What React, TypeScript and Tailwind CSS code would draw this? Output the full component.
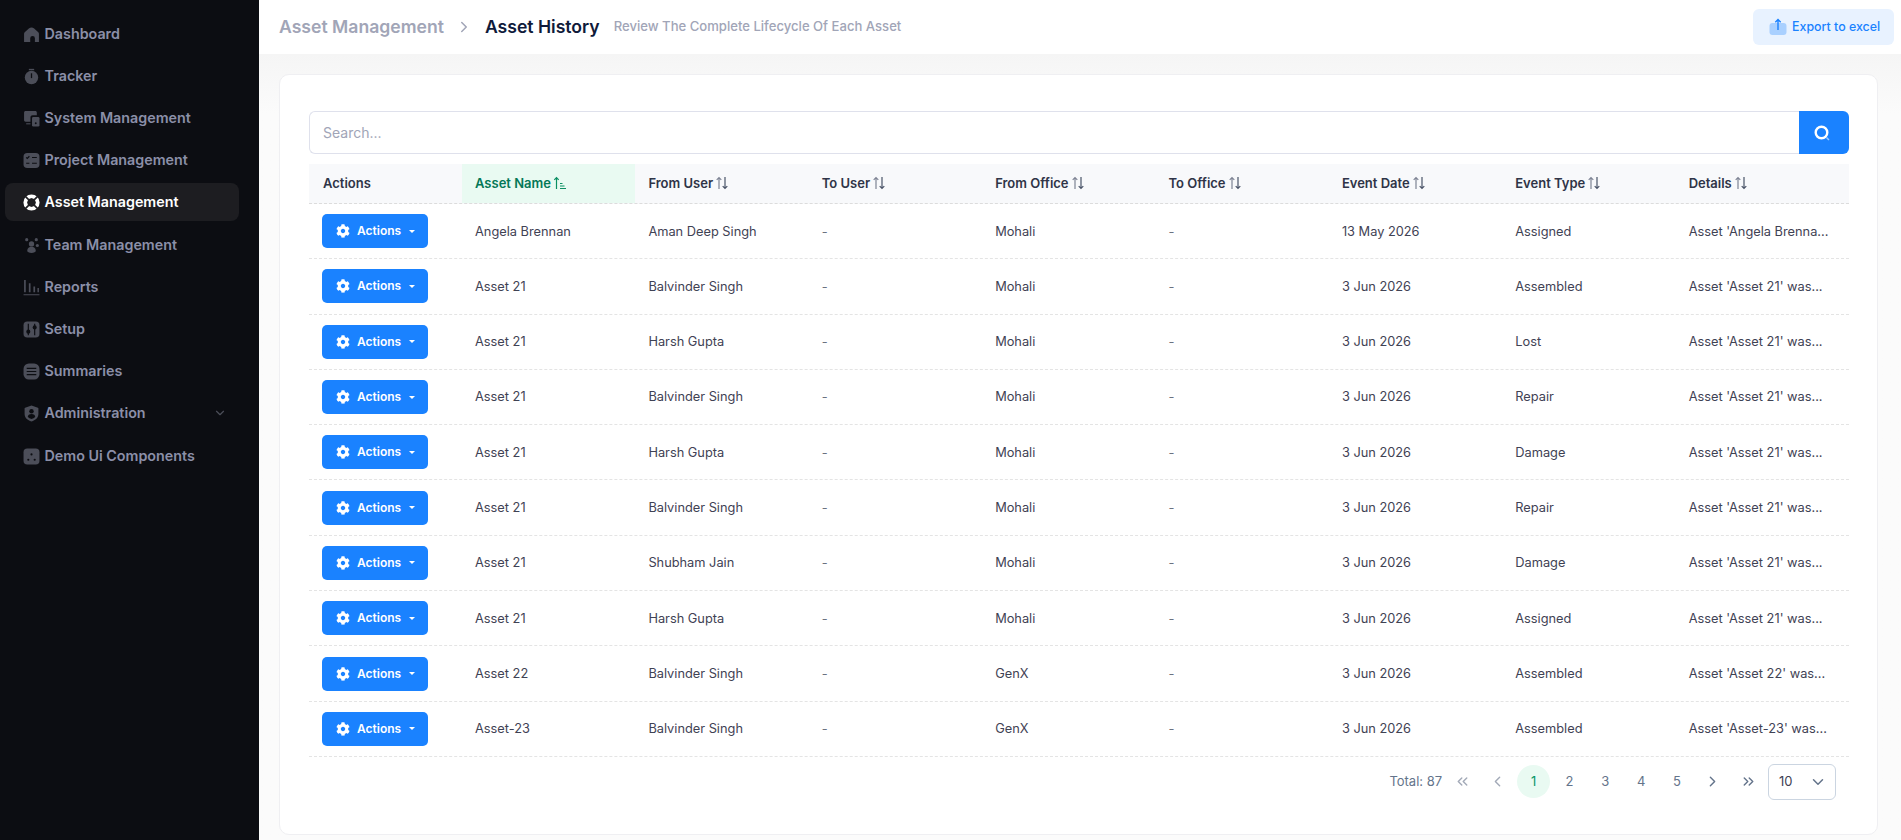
import React from 'react';
import { ChevronDown, ChevronLeft, ChevronRight, ChevronsLeft, ChevronsRight } from 'lucide-react';
import { FaCog } from 'react-icons/fa';

const muted = '#4c4e59';
const bgDark = '#0c0d12';

const IconHome = () => (
  <svg viewBox="0 0 16 16" className="w-[17px] h-[17px]">
    <path fill={muted} d="M1 15V7.2c0-.6.2-1 .6-1.400L5.500 2.300c1.500-1.300 3.500-1.300 5 0l3.900 3.500c.4.400.6.800.6 1.400V15h-3.800v-3.500a2.200 2.200 0 0 0-4.400 0V15z" />
  </svg>
);

const IconTimer = () => (
  <svg viewBox="0 0 16 16" className="w-[17px] h-[17px]">
    <rect x="5.500" y="0.800" width="5" height="1.300" fill={muted} />
    <circle cx="8" cy="9" r="6.300" fill={muted} />
    <rect x="7.400" y="5" width="1.200" height="4.500" fill={bgDark} />
  </svg>
);

const IconSystem = () => (
  <svg viewBox="0 0 16 16" className="w-[17px] h-[17px]">
    <path fill={muted} d="M1 2.500C1 1.600 1.600 1 2.500 1h9c.9 0 1.500.6 1.500 1.500V5H9c-1.100 0-2 .9-2 2v4H2.500C1.600 11 1 10.400 1 9.500z" />
    <rect x="8.500" y="6.500" width="7" height="9" rx="1.200" fill={muted} />
    <rect x="3" y="12.500" width="4" height="1" fill={muted} />
    <circle cx="12" cy="12.500" r="0.900" fill={bgDark} />
  </svg>
);

const IconProject = () => (
  <svg viewBox="0 0 16 16" className="w-[17px] h-[17px]">
    <rect x="0.500" y="1" width="15" height="14" rx="3.500" fill={muted} />
    <path stroke={bgDark} strokeWidth="1.100" fill="none" d="M3 5l1 1 2-2M8.500 5.200H13M3 10.600h3M8.500 10.600H13" />
  </svg>
);

const IconAsset = () => (
  <svg viewBox="0 0 16 16" className="w-[17px] h-[17px]">
    <circle cx="8" cy="8" r="5.800" fill="none" stroke="#fff" strokeWidth="3.600" />
    <path stroke="#1d1d21" strokeWidth="1.500" d="M1.500 1.500l4 4M14.500 1.500l-4 4M1.500 14.500l4-4M14.500 14.500l-4-4" />
    <rect x="5.200" y="5.200" width="5.600" height="5.600" fill="#1d1d21" transform="rotate(45 8 8)" />
  </svg>
);

const IconTeam = () => (
  <svg viewBox="0 0 16 16" className="w-[17px] h-[17px]">
    <circle cx="3.500" cy="2.500" r="1.500" fill={muted} />
    <circle cx="12.500" cy="2.500" r="1.500" fill={muted} />
    <circle cx="13.500" cy="8" r="1.500" fill={muted} />
    <circle cx="8" cy="6.500" r="2.500" fill={muted} />
    <path fill={muted} d="M4 13c0-2.500 1.800-3.800 4-3.800s4 1.300 4 3.800c0 1.300-1.800 2-4 2s-4-.7-4-2z" />
  </svg>
);

const IconReports = () => (
  <svg viewBox="0 0 16 16" className="w-[17px] h-[17px]">
    <path fill={muted} d="M1 1h1.600v11.500H1zM5.500 4h1.600v8.500H5.500zM9.800 7h1.600v5.500H9.800zM13.600 8.500H15v4h-1.400zM0.500 14.400h15v1h-15z" />
  </svg>
);

const IconSetup = () => (
  <svg viewBox="0 0 16 16" className="w-[17px] h-[17px]">
    <rect x="0.500" y="0.500" width="15" height="15" rx="3.500" fill={muted} />
    <path stroke={bgDark} strokeWidth="1.100" d="M5 2.500v11M11 2.500v11" />
    <circle cx="5" cy="10" r="1.900" fill={bgDark} />
    <circle cx="11" cy="6" r="1.900" fill={bgDark} />
  </svg>
);

const IconSummaries = () => (
  <svg viewBox="0 0 16 16" className="w-[17px] h-[17px]">
    <rect x="0.500" y="0.500" width="15" height="15" rx="5" fill={muted} />
    <path stroke={bgDark} strokeWidth="1.100" d="M3.500 5h9M3.500 8h9M3.500 11h9" />
  </svg>
);

const IconAdmin = () => (
  <svg viewBox="0 0 16 16" className="w-[17px] h-[17px]">
    <path fill={muted} d="M8 .5l6 2c.3.100.5.400.5.800v5.200c0 3.500-2.800 5.900-6.500 7-3.700-1.100-6.500-3.500-6.500-7V3.300c0-.4.200-.7.500-.8z" />
    <circle cx="8" cy="5.800" r="2.100" fill={bgDark} />
    <path fill={bgDark} d="M4.500 11.300c0-1.800 1.500-2.800 3.500-2.800s3.500 1 3.500 2.800c-1 .9-2.200 1.500-3.500 1.900-1.300-.4-2.500-1-3.500-1.900z" />
  </svg>
);

const IconDemo = () => (
  <svg viewBox="0 0 16 16" className="w-[17px] h-[17px]">
    <rect x="0.500" y="0.500" width="15" height="15" rx="3.500" fill={muted} />
    <circle cx="8" cy="6" r="1" fill={bgDark} />
    <circle cx="5" cy="11" r="1" fill={bgDark} />
    <circle cx="11" cy="11" r="1" fill={bgDark} />
  </svg>
);

const navItems = [
  { label: 'Dashboard', icon: IconHome },
  { label: 'Tracker', icon: IconTimer },
  { label: 'System Management', icon: IconSystem },
  { label: 'Project Management', icon: IconProject },
  { label: 'Asset Management', icon: IconAsset, active: true },
  { label: 'Team Management', icon: IconTeam, nudge: true },
  { label: 'Reports', icon: IconReports },
  { label: 'Setup', icon: IconSetup },
  { label: 'Summaries', icon: IconSummaries },
  { label: 'Administration', icon: IconAdmin, caret: true },
  { label: 'Demo Ui Components', icon: IconDemo, nudge: true },
];

const SortIcon = () => (
  <svg viewBox="0 0 14 14" className="w-[14px] h-[14px] ml-[2px] mb-[2px]">
    <path stroke="#7e8494" strokeWidth="1.200" fill="none" d="M4 13V1.500M1.700 3.800L4 1.500l2.300 2.300" />
    <path stroke="#4a5468" strokeWidth="1.200" fill="none" d="M10 1v11.500M7.700 10.200L10 12.500l2.300-2.300" />
  </svg>
);

const SortActiveIcon = () => (
  <svg viewBox="0 0 14 14" className="w-[14px] h-[14px] ml-[2px] mb-[2px]">
    <path stroke="#0b8f63" strokeWidth="1.200" fill="none" d="M3.500 13V1.500M1.300 3.800l2.200-2.300 2.200 2.300" />
    <path stroke="#0b8f63" strokeWidth="1" fill="none" d="M7 7.500h2.500M7 10h4.500M7 12.500h6" />
  </svg>
);

const columns = ['From User', 'To User', 'From Office', 'To Office', 'Event Date', 'Event Type', 'Details'];

const rows = [
  ['Angela Brennan', 'Aman Deep Singh', 'Mohali', '13 May 2026', 'Assigned', "Asset 'Angela Brenna..."],
  ['Asset 21', 'Balvinder Singh', 'Mohali', '3 Jun 2026', 'Assembled', "Asset 'Asset 21' was..."],
  ['Asset 21', 'Harsh Gupta', 'Mohali', '3 Jun 2026', 'Lost', "Asset 'Asset 21' was..."],
  ['Asset 21', 'Balvinder Singh', 'Mohali', '3 Jun 2026', 'Repair', "Asset 'Asset 21' was..."],
  ['Asset 21', 'Harsh Gupta', 'Mohali', '3 Jun 2026', 'Damage', "Asset 'Asset 21' was..."],
  ['Asset 21', 'Balvinder Singh', 'Mohali', '3 Jun 2026', 'Repair', "Asset 'Asset 21' was..."],
  ['Asset 21', 'Shubham Jain', 'Mohali', '3 Jun 2026', 'Damage', "Asset 'Asset 21' was..."],
  ['Asset 21', 'Harsh Gupta', 'Mohali', '3 Jun 2026', 'Assigned', "Asset 'Asset 21' was..."],
  ['Asset 22', 'Balvinder Singh', 'GenX', '3 Jun 2026', 'Assembled', "Asset 'Asset 22' was..."],
  ['Asset-23', 'Balvinder Singh', 'GenX', '3 Jun 2026', 'Assembled', "Asset 'Asset-23' was..."],
];

const gridCols = 'grid grid-cols-[153px_repeat(8,1fr)]';

const App: React.FC = () => {
  return (
    <div className="flex h-[840px] w-full overflow-hidden font-['Inter',sans-serif] bg-[#f9f9f9]">
      <aside className="w-[259px] shrink-0 bg-[#0c0d12] pt-[15px] px-[5px]">
        <nav className="flex flex-col gap-1 w-[234px]">
          {navItems.map((item) => (
            <div
              key={item.label}
              className={`flex items-center h-[38px] pl-[18px] pr-[12px] rounded-[8px] text-[14.3px] font-semibold ${
                item.active ? 'bg-[#1d1d21] text-white' : 'text-[#8b8fa8]'
              } ${item.nudge ? 'mt-[1px]' : ''}`}
            >
              <span className="mr-[4.5px] flex">
                <item.icon />
              </span>
              <span className="flex-1">{item.label}</span>
              {item.caret && <ChevronDown className="w-[14px] h-[14px] text-[#4c4e59]" />}
            </div>
          ))}
        </nav>
      </aside>

      <main className="flex-1 min-w-0 flex flex-col">
        <header className="h-[54px] bg-white flex items-center pl-[20px] pr-[7px]">
          <span className="text-[17.6px] font-semibold text-[#a1a5b7]">Asset Management</span>
          <ChevronRight className="w-[18px] h-[18px] ml-[11px] mr-[12px] text-[#a1a5b7]" />
          <span className="text-[17.6px] font-semibold text-[#0f1a3a]">Asset History</span>
          <span className="ml-[14px] text-[13.1px] font-medium text-[#a1a5b7]">Review The Complete Lifecycle Of Each Asset</span>
          <button className="ml-auto flex items-center h-[36px] w-[141px] pl-[16px] bg-[#e8f2ff] rounded-[6px] text-[12.4px] font-medium text-[#1a82ff]">
            <svg viewBox="0 0 18 18" className="w-[18px] h-[18px] mr-[5px]">
              <rect x="0.500" y="5" width="17" height="12" rx="3" fill="#a9d0ff" />
              <path stroke="#1a82ff" strokeWidth="1.400" fill="none" d="M9 12V1.500M6.300 4.200L9 1.500l2.700 2.700" />
            </svg>
            Export to excel
          </button>
        </header>

        <div className="flex-1 pt-[20px] pl-[20px] pr-[23px] bg-gradient-to-b from-[#f5f5f5] to-[#fbfbfb] to-[60px]">
          <section className="h-[761px] bg-white border border-[#efeff2] rounded-[10px] pt-[36px] pl-[29px] pr-[28px]">
            <div className="flex h-[43px] text-[14px]">
              <input
                placeholder="Search..."
                className="flex-1 border border-[#dfe1ec] border-r-0 rounded-l-[6px] pl-[13px] outline-none placeholder-[#a1a5b7] text-[14px]"
              />
              <button className="w-[50px] bg-[#1a82ff] rounded-r-[6px] flex items-center justify-center">
                <svg viewBox="0 0 18 18" className="w-[18px] h-[18px] mr-[5px]">
                  <circle cx="8.500" cy="8.500" r="5.800" fill="none" stroke="#fff" strokeWidth="2.400" />
                  <path stroke="#9cc8ff" strokeWidth="1.500" d="M13.500 13.500l2.500 2.500" />
                </svg>
              </button>
            </div>

            <div className="mt-[10px] text-[12.8px] text-[#3f4254]">
              <div className={`${gridCols} h-[40px] bg-[#f8f9fb] border-b border-dashed border-[#dcdcdc] text-[13px] font-semibold text-[#2f3447]`}>
                <div className="flex items-center pl-[14px]">Actions</div>
                <div className="flex items-center pl-[13px] bg-[#e9faf2] text-[#047857]">
                  Asset Name
                  <SortActiveIcon />
                </div>
                {columns.map((c) => (
                  <div key={c} className="flex items-center pl-[13px]">
                    {c}
                    <SortIcon />
                  </div>
                ))}
              </div>

              {rows.map((r, i) => (
                <div key={i} className={`${gridCols} h-[55.3px] border-b border-dashed border-[#e4e4e4]`}>
                  <div className="flex items-center pl-[13px]">
                    <button className="flex items-center h-[34px] w-[106px] pl-[14px] bg-[#1a82ff] rounded-[5px] text-white text-[12px] font-semibold">
                      <FaCog className="w-[14px] h-[14px] mr-[7px]" />
                      Actions
                      <span className="ml-[8px] w-0 h-0 border-x-[3px] border-t-[3px] border-x-transparent border-t-white" />
                    </button>
                  </div>
                  <div className="flex items-center pl-[13px]">{r[0]}</div>
                  <div className="flex items-center pl-[13px]">{r[1]}</div>
                  <div className="flex items-center pl-[13px] text-[#6b7280]">-</div>
                  <div className="flex items-center pl-[13px]">{r[2]}</div>
                  <div className="flex items-center pl-[13px] text-[#6b7280]">-</div>
                  <div className="flex items-center pl-[13px]">{r[3]}</div>
                  <div className="flex items-center pl-[13px]">{r[4]}</div>
                  <div className="flex items-center pl-[13px] whitespace-nowrap">{r[5]}</div>
                </div>
              ))}
            </div>

            <div className="flex items-center justify-end mt-[7px] pr-[13px] text-[13px] text-[#64748b]">
              <span className="mr-[3.5px]">Total: 87</span>
              <span className="w-[33px] mr-[2.8px] flex justify-center text-[#a3aab8]"><ChevronsLeft className="w-[17px] h-[17px]" /></span>
              <span className="w-[33px] mr-[2.8px] flex justify-center text-[#a3aab8]"><ChevronLeft className="w-[17px] h-[17px]" /></span>
              <span className="w-[33px] h-[33px] mr-[2.8px] rounded-full bg-[#e9faf2] text-[#059669] flex items-center justify-center">1</span>
              {['2', '3', '4', '5'].map((p) => (
                <span key={p} className="w-[33px] h-[33px] mr-[2.8px] flex items-center justify-center">{p}</span>
              ))}
              <span className="w-[33px] mr-[2.8px] flex justify-center"><ChevronRight className="w-[17px] h-[17px]" /></span>
              <span className="w-[33px] flex justify-center"><ChevronsRight className="w-[17px] h-[17px]" /></span>
              <div className="ml-[3px] w-[68px] h-[36px] border border-[#cbd5e1] rounded-[6px] flex items-center justify-between pl-[10px] pr-[8px] text-[#3f4254]">
                10
                <ChevronDown className="w-[18px] h-[18px] text-[#64748b]" />
              </div>
            </div>
          </section>
        </div>
      </main>
    </div>
  );
};

export default App;
